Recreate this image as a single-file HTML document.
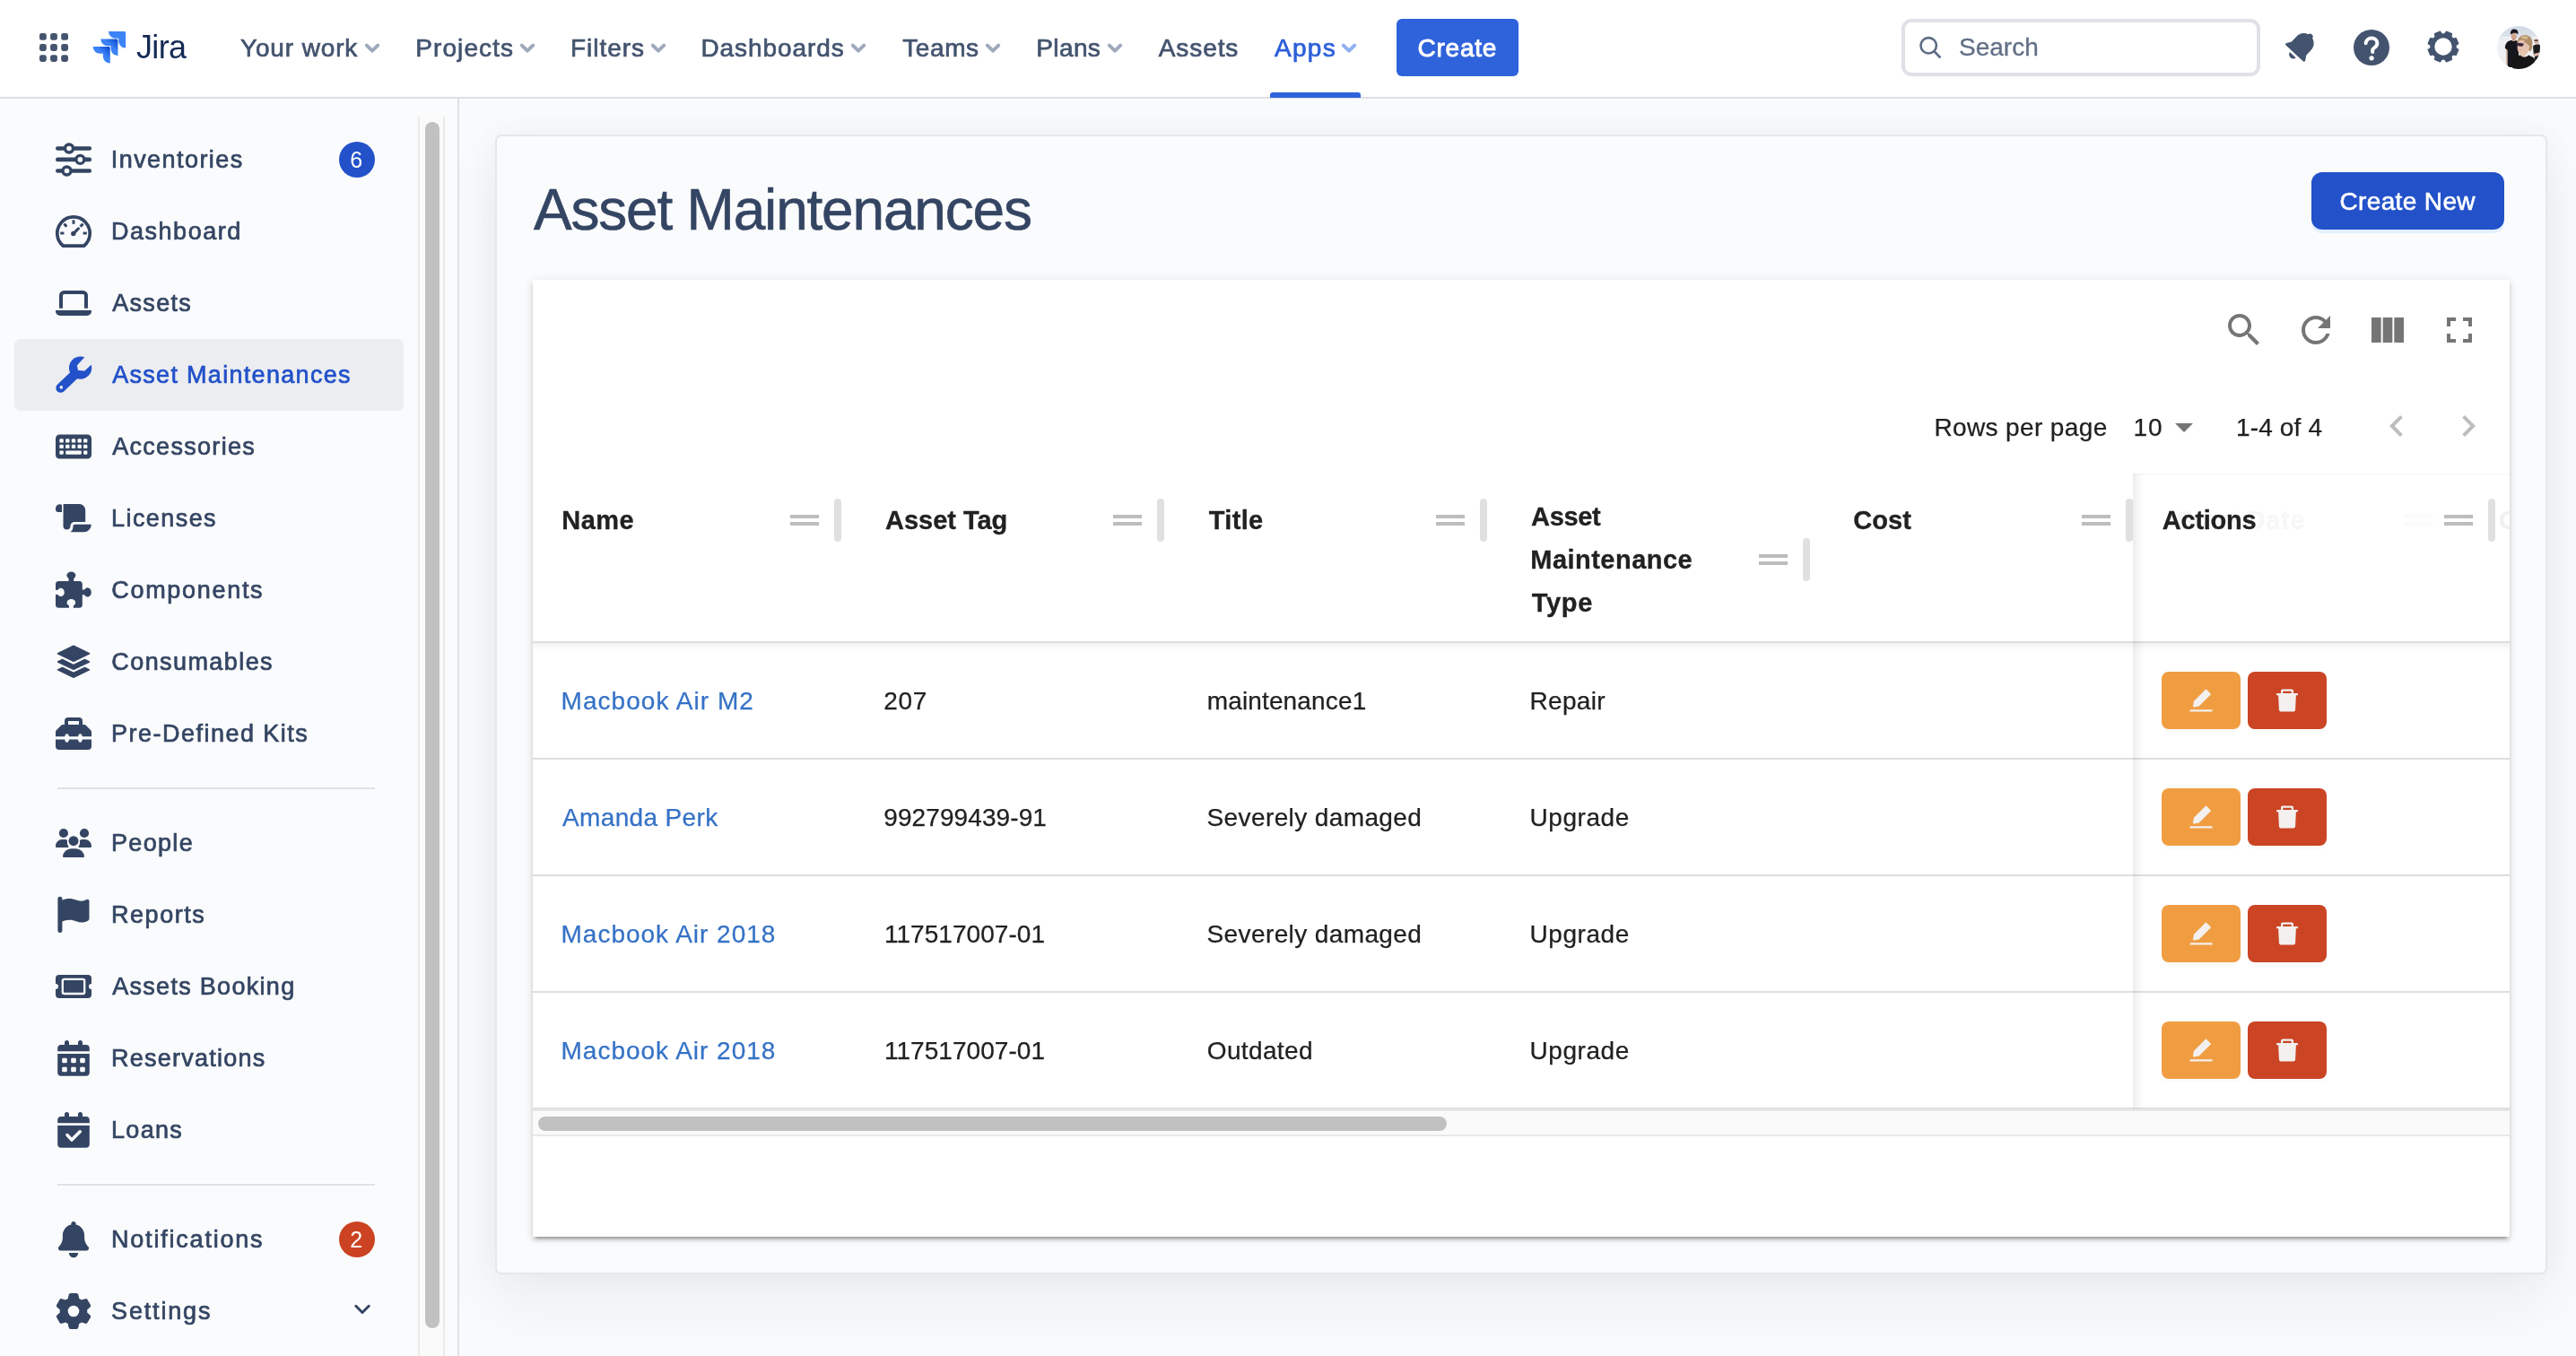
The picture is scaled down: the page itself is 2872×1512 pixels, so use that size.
<!DOCTYPE html>
<html lang="en"><head><meta charset="utf-8"><title>Asset Maintenances - Jira</title>
<style>
html,body{margin:0;padding:0;}
body{width:2872px;height:1512px;overflow:hidden;position:relative;background:#fff;font-family:'Liberation Sans',sans-serif;}
.t{position:absolute;white-space:nowrap;}
#root{position:absolute;left:0;top:0;width:2872px;height:1512px;will-change:transform;}
.a{position:absolute;}
svg{position:absolute;overflow:visible;}
#nav{position:absolute;left:0;top:0;width:2872px;height:108px;background:#fff;border-bottom:2px solid #dddfe5;}
#side{position:absolute;left:0;top:110px;width:510px;height:1402px;background:#fafbfc;border-right:2px solid #dfe1e6;}
#main{position:absolute;left:512px;top:110px;width:2360px;height:1402px;background:#f9fafb;overflow:hidden;}
#card{position:absolute;left:40px;top:40px;width:2284px;height:1267px;background:#fafbfc;border:2px solid #e5e7ec;border-radius:7px;box-shadow:0 30px 70px rgba(9,30,66,0.06), 0 0 36px rgba(9,30,66,0.035);}
#paper{position:absolute;left:594px;top:312px;width:2204px;height:1067px;background:#fff;box-shadow:0 6px 2px -4px rgba(0,0,0,0.2),0 4px 4px 0 rgba(0,0,0,0.14),0 2px 10px 0 rgba(0,0,0,0.12);overflow:hidden;}

</style></head>
<body>
<div id="root">
<div id="nav"></div>
<svg width="2872" height="110" style="left:0;top:0" viewBox="0 0 2872 110"><rect x="44.0" y="37.0" width="7.8" height="7.8" rx="2.4" fill="#44546f"/><rect x="44.0" y="49.1" width="7.8" height="7.8" rx="2.4" fill="#44546f"/><rect x="44.0" y="61.2" width="7.8" height="7.8" rx="2.4" fill="#44546f"/><rect x="56.1" y="37.0" width="7.8" height="7.8" rx="2.4" fill="#44546f"/><rect x="56.1" y="49.1" width="7.8" height="7.8" rx="2.4" fill="#44546f"/><rect x="56.1" y="61.2" width="7.8" height="7.8" rx="2.4" fill="#44546f"/><rect x="68.2" y="37.0" width="7.8" height="7.8" rx="2.4" fill="#44546f"/><rect x="68.2" y="49.1" width="7.8" height="7.8" rx="2.4" fill="#44546f"/><rect x="68.2" y="61.2" width="7.8" height="7.8" rx="2.4" fill="#44546f"/><defs><linearGradient id="jg1" x1="98%" y1="0%" x2="58%" y2="41%"><stop offset="18%" stop-color="#0f4fd0"/><stop offset="100%" stop-color="#3b83f7"/></linearGradient></defs><g transform="translate(103.7,29) scale(1.522,1.487)"><path d="M22.94 4H11.41c0 2.87 2.33 5.2 5.2 5.2h2.13v2.05c0 2.87 2.33 5.2 5.2 5.2V5c0-.55-.45-1-1-1z" fill="#3b83f7"/><path d="M17.23 9.74H5.71c0 2.87 2.33 5.2 5.2 5.2h2.12V17c0 2.87 2.33 5.2 5.2 5.2V10.74c0-.55-.44-1-1-1z" fill="url(#jg1)"/><path d="M11.53 15.48H0c0 2.87 2.33 5.2 5.2 5.2h2.13v2.06c0 2.87 2.33 5.2 5.2 5.2V16.48c0-.55-.45-1-1-1z" fill="url(#jg1)"/></g></svg>
<span class="t " style="left:151.96px;top:34.73px;font-size:36px;line-height:36px;color:#142a55;letter-spacing:-0.626px;">Jira</span>
<span class="t " style="left:267.96px;top:39.80px;font-size:28px;line-height:28px;color:#44546f;letter-spacing:0.868px;-webkit-text-stroke:0.7px #44546f;">Your work</span>
<svg width="20" height="14" style="left:405.0px;top:47.3px" viewBox="0 0 20 14"><path d="M3.8 3.6 L10 9.6 L16.2 3.6" fill="none" stroke="#9fa9bb" stroke-width="4" stroke-linecap="round" stroke-linejoin="round"/></svg>
<span class="t " style="left:463.25px;top:39.80px;font-size:28px;line-height:28px;color:#44546f;letter-spacing:1.094px;-webkit-text-stroke:0.7px #44546f;">Projects</span>
<svg width="20" height="14" style="left:578.0px;top:47.3px" viewBox="0 0 20 14"><path d="M3.8 3.6 L10 9.6 L16.2 3.6" fill="none" stroke="#9fa9bb" stroke-width="4" stroke-linecap="round" stroke-linejoin="round"/></svg>
<span class="t " style="left:636.05px;top:39.80px;font-size:28px;line-height:28px;color:#44546f;letter-spacing:0.944px;-webkit-text-stroke:0.7px #44546f;">Filters</span>
<svg width="20" height="14" style="left:723.8px;top:47.3px" viewBox="0 0 20 14"><path d="M3.8 3.6 L10 9.6 L16.2 3.6" fill="none" stroke="#9fa9bb" stroke-width="4" stroke-linecap="round" stroke-linejoin="round"/></svg>
<span class="t " style="left:781.45px;top:39.80px;font-size:28px;line-height:28px;color:#44546f;letter-spacing:0.921px;-webkit-text-stroke:0.7px #44546f;">Dashboards</span>
<svg width="20" height="14" style="left:946.7px;top:47.3px" viewBox="0 0 20 14"><path d="M3.8 3.6 L10 9.6 L16.2 3.6" fill="none" stroke="#9fa9bb" stroke-width="4" stroke-linecap="round" stroke-linejoin="round"/></svg>
<span class="t " style="left:1006.27px;top:39.80px;font-size:28px;line-height:28px;color:#44546f;letter-spacing:0.573px;-webkit-text-stroke:0.7px #44546f;">Teams</span>
<svg width="20" height="14" style="left:1096.8px;top:47.3px" viewBox="0 0 20 14"><path d="M3.8 3.6 L10 9.6 L16.2 3.6" fill="none" stroke="#9fa9bb" stroke-width="4" stroke-linecap="round" stroke-linejoin="round"/></svg>
<span class="t " style="left:1155.15px;top:39.80px;font-size:28px;line-height:28px;color:#44546f;letter-spacing:0.422px;-webkit-text-stroke:0.7px #44546f;">Plans</span>
<svg width="20" height="14" style="left:1232.8px;top:47.3px" viewBox="0 0 20 14"><path d="M3.8 3.6 L10 9.6 L16.2 3.6" fill="none" stroke="#9fa9bb" stroke-width="4" stroke-linecap="round" stroke-linejoin="round"/></svg>
<span class="t " style="left:1291.69px;top:39.80px;font-size:28px;line-height:28px;color:#44546f;letter-spacing:0.931px;-webkit-text-stroke:0.7px #44546f;">Assets</span>
<span class="t " style="left:1420.99px;top:39.80px;font-size:28px;line-height:28px;color:#2d60d8;letter-spacing:1.311px;-webkit-text-stroke:0.7px #2d60d8;">Apps</span>
<svg width="20" height="14" style="left:1494.3px;top:47.3px" viewBox="0 0 20 14"><path d="M3.8 3.6 L10 9.6 L16.2 3.6" fill="none" stroke="#8fb0f3" stroke-width="4" stroke-linecap="round" stroke-linejoin="round"/></svg>
<div class="a" style="left:1416px;top:103px;width:101px;height:6px;background:#2f63dc;border-radius:3px 3px 0 0"></div>
<div class="a" style="left:1557px;top:21px;width:136px;height:64px;background:#2f63dc;border-radius:6px"></div>
<span class="t " style="left:1580.42px;top:39.80px;font-size:28px;line-height:28px;color:#fff;letter-spacing:0.787px;-webkit-text-stroke:0.9px #fff;">Create</span>
<div class="a" style="left:2120px;top:21px;width:392px;height:56px;border:4px solid #dfe1e7;border-radius:11px;background:#fff"></div>
<svg width="30" height="30" style="left:2138px;top:38px" viewBox="0 0 30 30"><circle cx="12.2" cy="12.8" r="8.7" fill="none" stroke="#5d6b84" stroke-width="2.6"/><path d="M18.6 19.4 L24.6 25.6" stroke="#5d6b84" stroke-width="2.8" stroke-linecap="round"/></svg>
<span class="t " style="left:2184.10px;top:38.90px;font-size:28px;line-height:28px;color:#626f86;letter-spacing:-0.021px;-webkit-text-stroke:0.3px #626f86;">Search</span>
<svg width="48" height="48" style="left:2541px;top:28.2px" viewBox="0 0 48 48"><g transform="rotate(43 24 24) translate(24 24) scale(1.06) translate(-24 -24)" fill="#44546f"><path d="M24 6.5c1.6 0 2.9 1.1 3.1 2.6 4.6 1.4 7.4 5.4 7.4 10.4v7.2l3 4.6c.6 1-.1 2.2-1.2 2.2H11.700c-1.1 0-1.800-1.200-1.200-2.200l3-4.600v-7.200c0-5 2.800-9 7.400-10.400.200-1.500 1.500-2.600 3.100-2.600z"/><path d="M19.6 36h8.800c-.4 2.200-2.200 3.700-4.400 3.700s-4-1.500-4.400-3.700z"/></g></svg>
<svg width="44" height="44" style="left:2622px;top:31px" viewBox="0 0 44 44"><circle cx="22" cy="22" r="20" fill="#44546f"/><path d="M15.6 17.2c.3-3.300 2.900-5.600 6.500-5.600 3.700 0 6.300 2.300 6.300 5.500 0 2.300-1.100 3.800-3.100 5-1.500.9-2.100 1.700-2.100 3.100v1.9" fill="none" stroke="#fff" stroke-width="4" stroke-linecap="round"/><circle cx="22.1" cy="33.8" r="2.6" fill="#fff"/></svg>
<svg width="44" height="44" style="left:2702px;top:30.2px" viewBox="0 0 44 44"><path d="M35.90 23.65 L38.64 25.47 L36.22 31.31 L32.99 30.67 L30.67 32.99 L31.31 36.22 L25.47 38.64 L23.65 35.90 L20.35 35.90 L18.53 38.64 L12.69 36.22 L13.33 32.99 L11.01 30.67 L7.78 31.31 L5.36 25.47 L8.10 23.65 L8.10 20.35 L5.36 18.53 L7.78 12.69 L11.01 13.33 L13.33 11.01 L12.69 7.78 L18.53 5.36 L20.35 8.10 L23.65 8.10 L25.47 5.36 L31.31 7.78 L30.67 11.01 L32.99 13.33 L36.22 12.69 L38.64 18.53 L35.90 20.35Z M11.50 22.00 a10.5 10.5 0 1 0 21.0 0 a10.5 10.5 0 1 0 -21.0 0Z" fill="#44546f" fill-rule="evenodd" stroke="#44546f" stroke-width="1.6" stroke-linejoin="round"/></svg>
<svg width="48" height="48" style="left:2784.2px;top:29px" viewBox="0 0 48 48"><defs><clipPath id="avc"><circle cx="24" cy="24" r="24"/></clipPath><filter id="avb" x="-10%" y="-10%" width="120%" height="120%"><feGaussianBlur stdDeviation="0.55"/></filter><linearGradient id="avsky" x1="0" y1="0" x2="0" y2="1"><stop offset="0" stop-color="#cfd9e4"/><stop offset="0.27" stop-color="#dbe2ea"/><stop offset="0.34" stop-color="#eef0f3"/><stop offset="1" stop-color="#f1f1f2"/></linearGradient></defs><g clip-path="url(#avc)"><rect x="-2" y="-2" width="52" height="52" fill="url(#avsky)"/><g filter="url(#avb)"><rect x="4" y="12" width="14" height="1.6" fill="#f4f6f8"/><path d="M9.700 26 L11.600 26 L12.200 43 L10 44 Z" fill="#dcc0b0"/><path d="M8.800 24.500 C9 19 12 16.300 16 16 L21 16 C23.500 16.500 24.500 19 24.200 22 L24 46 L11.800 46 L11.600 27 Z" fill="#17161a"/><ellipse cx="18.700" cy="11.400" rx="3.100" ry="4" fill="#cfa78f"/><path d="M15 9.500 C14.600 5 17 3.500 19.500 3.600 C22.500 3.700 24 6 23.300 9.600 C22 7.500 18 7 15 9.500 Z" fill="#19171a"/><rect x="17" y="14.500" width="3.400" height="2.500" fill="#c59c86"/><ellipse cx="43.200" cy="13.300" rx="2.900" ry="2.300" fill="#f1ebea"/><ellipse cx="44" cy="17.300" rx="2.600" ry="3" fill="#dcb8a6"/><rect x="41.500" y="15.500" width="4" height="1.300" fill="#2a2428"/><path d="M40 23 C41 20.500 45 20 48 21 L48 34 L41 33 Z" fill="#1b1a1e"/><path d="M40.500 31 L47 29.500 L47 33 L42 35 Z" fill="#d9b5a6"/><path d="M41.500 34.500 L47 32.500 L46 40 L42.500 38 Z" fill="#1a191c"/><path d="M22.500 22 C21.500 13 27 9.300 32 10 C37.500 10.800 40 15 39.300 21 C39 25 38.500 27.500 36.500 28.500 L33 24 L24 17.500 Z" fill="#b08f6b"/><path d="M27 11.500 C30 10.500 33 11 35 12.500 L33 15 L27.500 14 Z" fill="#d2b68f"/><path d="M22.600 19.500 C23 16.500 25 15.500 28 15.800 C31 16 33.500 18 34.600 21 C36 21 36.600 23 35.500 25.500 C35 29 33.500 31.500 31 33 L31.500 36 L25 36 L25.500 30.500 C23.500 29.500 22.500 27 22.700 24 Z" fill="#e6c3ae"/><path d="M30.500 15.500 C33 16 35 18 35.300 21.500 C34 20.500 32.500 19 30.500 18.500 Z" fill="#b3916d"/><path d="M21.800 19.300 C23.500 18.500 26 18.700 27.600 19.300 L29.800 19.500 L29.600 20.400 C29.400 22 28 23 26 22.800 C24.500 22.700 23 22.300 22 21.600 Z" fill="#3d2b41"/><path d="M23.500 26.300 C24.800 26.800 26 26.800 27 26.300" stroke="#c98f86" stroke-width="0.7" fill="none"/><path d="M17.500 41 C18 36.500 21 34 26 32.600 C28 35.500 32 35.500 35 32.500 C39.500 33.500 43 36.500 43.500 41 L42 50 L17 50 Z" fill="#151418"/><path d="M36 32 C38 31.500 39.500 33 39.500 34.500 L37 33.500 Z" fill="#e9e6e6"/></g></g></svg>
<div id="side"></div>
<div class="a" style="left:466px;top:130px;width:26px;height:1382px;background:#fafafa;border-left:2px solid #ebebeb;border-right:2px solid #ebebeb"></div>
<div class="a" style="left:474px;top:136px;width:16px;height:1345px;background:#c1c1c1;border-radius:8px"></div>
<div class="a" style="left:16px;top:378px;width:434px;height:80px;background:#ecedf1;border-radius:7px"></div>
<span class="t " style="left:123.75px;top:165.04px;font-size:27px;line-height:27px;color:#344563;letter-spacing:1.439px;-webkit-text-stroke:0.7px #344563;">Inventories</span>
<span class="t " style="left:124.03px;top:245.04px;font-size:27px;line-height:27px;color:#344563;letter-spacing:1.517px;-webkit-text-stroke:0.7px #344563;">Dashboard</span>
<span class="t " style="left:125.20px;top:325.04px;font-size:27px;line-height:27px;color:#344563;letter-spacing:1.327px;-webkit-text-stroke:0.7px #344563;">Assets</span>
<span class="t " style="left:125.20px;top:405.04px;font-size:27px;line-height:27px;color:#2251c9;letter-spacing:1.306px;-webkit-text-stroke:0.7px #2251c9;">Asset Maintenances</span>
<span class="t " style="left:125.20px;top:485.04px;font-size:27px;line-height:27px;color:#344563;letter-spacing:1.305px;-webkit-text-stroke:0.7px #344563;">Accessories</span>
<span class="t " style="left:124.03px;top:565.04px;font-size:27px;line-height:27px;color:#344563;letter-spacing:1.431px;-webkit-text-stroke:0.7px #344563;">Licenses</span>
<span class="t " style="left:124.29px;top:645.04px;font-size:27px;line-height:27px;color:#344563;letter-spacing:1.693px;-webkit-text-stroke:0.7px #344563;">Components</span>
<span class="t " style="left:124.29px;top:725.04px;font-size:27px;line-height:27px;color:#344563;letter-spacing:1.424px;-webkit-text-stroke:0.7px #344563;">Consumables</span>
<span class="t " style="left:124.03px;top:805.04px;font-size:27px;line-height:27px;color:#344563;letter-spacing:1.481px;-webkit-text-stroke:0.7px #344563;">Pre-Defined Kits</span>
<div class="a" style="left:64px;top:878px;width:354px;height:2px;background:#dfe1e6"></div>
<span class="t " style="left:124.03px;top:927.04px;font-size:27px;line-height:27px;color:#344563;letter-spacing:1.315px;-webkit-text-stroke:0.7px #344563;">People</span>
<span class="t " style="left:124.03px;top:1007.04px;font-size:27px;line-height:27px;color:#344563;letter-spacing:1.537px;-webkit-text-stroke:0.7px #344563;">Reports</span>
<span class="t " style="left:125.20px;top:1087.04px;font-size:27px;line-height:27px;color:#344563;letter-spacing:1.299px;-webkit-text-stroke:0.7px #344563;">Assets Booking</span>
<span class="t " style="left:124.03px;top:1167.04px;font-size:27px;line-height:27px;color:#344563;letter-spacing:1.238px;-webkit-text-stroke:0.7px #344563;">Reservations</span>
<span class="t " style="left:124.03px;top:1247.04px;font-size:27px;line-height:27px;color:#344563;letter-spacing:1.304px;-webkit-text-stroke:0.7px #344563;">Loans</span>
<div class="a" style="left:64px;top:1320px;width:354px;height:2px;background:#dfe1e6"></div>
<span class="t " style="left:124.03px;top:1369.04px;font-size:27px;line-height:27px;color:#344563;letter-spacing:1.792px;-webkit-text-stroke:0.7px #344563;">Notifications</span>
<span class="t " style="left:124.09px;top:1449.04px;font-size:27px;line-height:27px;color:#344563;letter-spacing:1.824px;-webkit-text-stroke:0.7px #344563;">Settings</span>
<svg width="510" height="1512" style="left:0;top:0" viewBox="0 0 510 1512"><path d="M64.3 165.5 H99.8" stroke="#344563" stroke-width="4.6" stroke-linecap="round"/><circle cx="77" cy="165.5" r="4.5" fill="#fafbfc" stroke="#344563" stroke-width="3.4"/><path d="M64.3 177.9 H99.8" stroke="#344563" stroke-width="4.6" stroke-linecap="round"/><circle cx="89.4" cy="177.9" r="4.5" fill="#fafbfc" stroke="#344563" stroke-width="3.4"/><path d="M64.3 190.5 H99.8" stroke="#344563" stroke-width="4.6" stroke-linecap="round"/><circle cx="74.5" cy="190.5" r="4.5" fill="#fafbfc" stroke="#344563" stroke-width="3.4"/><path d="M70.5 274.2 H93.5 A18.2 18.2 0 1 0 70.5 274.2 Z" fill="none" stroke="#344563" stroke-width="3.7" stroke-linejoin="round"/><g stroke="#344563" stroke-width="2.9" stroke-linecap="butt"><path d="M82 245.3 V249.8"/><path d="M67.2 260 H71.4"/><path d="M92.6 260 H96.8"/><path d="M71.4 249.6 L74.400 252.6"/><path d="M92.6 249.6 L89.6 252.6"/></g><path d="M82 260.4 L87.3 255" stroke="#344563" stroke-width="3.2" stroke-linecap="round"/><circle cx="81.8" cy="260.5" r="2.7" fill="#344563"/><path d="M68 343.8 V329.5 a3.5 3.5 0 0 1 3.5 -3.5 H92.5 a3.5 3.5 0 0 1 3.5 3.5 V343.8" fill="none" stroke="#344563" stroke-width="4"/><path d="M62 346 H102 V347 a5 5 0 0 1 -5 5 H67 a5 5 0 0 1 -5 -5 Z" fill="#344563"/><path d="M67.6 432.6 L85 416" stroke="#2251c9" stroke-width="10.5" stroke-linecap="round"/><circle cx="89.6" cy="410.2" r="12.6" fill="#2251c9"/><path d="M87 407.6 L98.500 395.2 L108 399.5 L94 412.6 L87.800 412 Z" fill="#ecedf1" stroke="#ecedf1" stroke-width="2" stroke-linejoin="round"/><circle cx="68.3" cy="431.9" r="1.8" fill="#ecedf1"/><rect x="62" y="484.5" width="40" height="27" rx="4.5" fill="#344563"/><rect x="66.39999999999999" y="489.2" width="4.4" height="4.4" rx="1.2" fill="#fafbfc"/><rect x="73.1" y="489.2" width="4.4" height="4.4" rx="1.2" fill="#fafbfc"/><rect x="79.8" y="489.2" width="4.4" height="4.4" rx="1.2" fill="#fafbfc"/><rect x="86.5" y="489.2" width="4.4" height="4.4" rx="1.2" fill="#fafbfc"/><rect x="93.0" y="489.2" width="4.4" height="4.4" rx="1.2" fill="#fafbfc"/><rect x="66.39999999999999" y="495.7" width="4.4" height="4.4" rx="1.2" fill="#fafbfc"/><rect x="73.1" y="495.7" width="4.4" height="4.4" rx="1.2" fill="#fafbfc"/><rect x="79.8" y="495.7" width="4.4" height="4.4" rx="1.2" fill="#fafbfc"/><rect x="86.5" y="495.7" width="4.4" height="4.4" rx="1.2" fill="#fafbfc"/><rect x="93.0" y="495.7" width="4.4" height="4.4" rx="1.2" fill="#fafbfc"/><rect x="66.39999999999999" y="502.40000000000003" width="4.4" height="4.4" rx="1.2" fill="#fafbfc"/><rect x="93.0" y="502.40000000000003" width="4.4" height="4.4" rx="1.2" fill="#fafbfc"/><rect x="73.2" y="502.40000000000003" width="17.6" height="4.4" rx="1.2" fill="#fafbfc"/><path d="M62 566.5 a4.500 4.500 0 0 1 7 -3.5 V571 H65 a3 3 0 0 1 -3 -3 Z" fill="#344563"/><path d="M70.6 562 H88.500 a6.700 6.700 0 0 1 6.700 6.700 V582 H83 a4.5 4.5 0 0 0 -4.500 4.500 a4 4 0 0 1 -8 0 Z" fill="#344563"/><path d="M83.500 584.8 H101.8 a8.300 8.300 0 0 1 -8.300 8.500 H78.5 a7 7 0 0 0 3 -5.5 a2.5 2.5 0 0 1 2 -3 Z" fill="#344563"/><rect x="62" y="648" width="29.8" height="29.700" rx="3.5" fill="#344563"/><ellipse cx="79.4" cy="641.6" rx="5" ry="4.1" fill="#344563"/><rect x="76.6" y="643" width="5.6" height="7" fill="#344563"/><ellipse cx="97.6" cy="660.4" rx="4.2" ry="5.2" fill="#344563"/><rect x="90" y="657.6" width="6" height="5.6" fill="#344563"/><ellipse cx="67.8" cy="660.4" rx="4" ry="4.600" fill="#fafbfc"/><rect x="61" y="657.9" width="5" height="5" fill="#fafbfc"/><ellipse cx="79.4" cy="672" rx="4.8" ry="4" fill="#fafbfc"/><rect x="77" y="673" width="4.800" height="6" fill="#fafbfc"/><path d="M82 720.3 L99.500 728.8 L82 737.3 L64.5 728.8 Z" fill="#344563" stroke="#344563" stroke-width="1.6" stroke-linejoin="round"/><path d="M69.5 735.5 L82 741.6 L94.5 735.5 L99.500 738 L82 746.4 L64.5 738 Z" fill="#344563" stroke="#344563" stroke-width="1.4" stroke-linejoin="round"/><path d="M69.5 744.4 L82 750.5 L94.5 744.4 L99.500 746.9 L82 755.3 L64.5 746.9 Z" fill="#344563" stroke="#344563" stroke-width="1.4" stroke-linejoin="round"/><path d="M74 808 V804 a2 2 0 0 1 2 -2 H88 a2 2 0 0 1 2 2 V808" fill="none" stroke="#344563" stroke-width="4"/><path d="M70 808 H94 a3 3 0 0 1 2 1 L101 814 a3 3 0 0 1 1 2 V821.3 H62 V816 a3 3 0 0 1 1 -2 L68 809 a3 3 0 0 1 2 -1 Z" fill="#344563"/><path d="M62 824.5 H102 V832 a4 4 0 0 1 -4 4 H66 a4 4 0 0 1 -4 -4 Z" fill="#344563"/><ellipse cx="74.6" cy="823" rx="2.5" ry="4.800" fill="#fafbfc"/><ellipse cx="89.4" cy="823" rx="2.5" ry="4.800" fill="#fafbfc"/><circle cx="70.9" cy="929" r="5.1" fill="#344563"/><circle cx="94" cy="929" r="5.1" fill="#344563"/><path d="M62 944 a7.500 7.500 0 0 1 7.500 -8 H72.5 a5 5 0 0 1 2.500 1 a9 9 0 0 0 1.500 7 a1 1 0 0 1 -1 1 H63 a1 1 0 0 1 -1 -1 Z" fill="#344563"/><path d="M102 944 a7.500 7.500 0 0 0 -7.500 -8 H91.5 a5 5 0 0 0 -2.500 1 a9 9 0 0 1 -1.500 7 a1 1 0 0 0 1 1 H101 a1 1 0 0 0 1 -1 Z" fill="#344563"/><circle cx="82" cy="937.7" r="6.1" fill="#344563" stroke="#fafbfc" stroke-width="1.2"/><path d="M70 955 a9.500 9.500 0 0 1 9.500 -8.800 H84.5 a9.500 9.500 0 0 1 9.500 8.800 a1.100 1.100 0 0 1 -1.100 1.100 H71.100 a1.100 1.100 0 0 1 -1.100 -1.100 Z" fill="#344563"/><path d="M66.9 1002.3 V1037.5" stroke="#344563" stroke-width="5" stroke-linecap="round"/><path d="M68 1004 C75 1001 80 1001.5 85 1003.5 C89 1005.2 93 1005 96.500 1003 C98 1002.2 99.5 1003 99.5 1005 V1024 C99.5 1025.5 98.8 1026.3 97.5 1027 C93 1029 89 1029 85 1027.3 C80 1025.2 75 1025 68 1028 Z" fill="#344563"/><path d="M66 1087 H98 a4 4 0 0 1 4 4 V1097 a3 3 0 0 0 0 6 V1109 a4 4 0 0 1 -4 4 H66 a4 4 0 0 1 -4 -4 V1103 a3 3 0 0 0 0 -6 V1091 a4 4 0 0 1 4 -4 Z" fill="#344563"/><rect x="69.8" y="1091.8" width="24.4" height="16.2" rx="1.800" fill="none" stroke="#fafbfc" stroke-width="2.3"/><path d="M68.2 1165 H95.8 a4 4 0 0 1 4 4 V1172.2 H64.2 V1169 a4 4 0 0 1 4 -4 Z" fill="#344563"/><path d="M74.5 1162.5 V1168 M89.5 1162.5 V1168" stroke="#344563" stroke-width="5" stroke-linecap="round"/><path d="M64.2 1175 H99.8 V1195.7 a4 4 0 0 1 -4 4 H68.2 a4 4 0 0 1 -4 -4 Z" fill="#344563"/><rect x="69.2" y="1179.8" width="5.6" height="5.4" rx="1.3" fill="#fafbfc"/><rect x="79.2" y="1179.8" width="5.6" height="5.4" rx="1.3" fill="#fafbfc"/><rect x="89.2" y="1179.8" width="5.6" height="5.4" rx="1.3" fill="#fafbfc"/><rect x="69.2" y="1189.8" width="5.6" height="5.4" rx="1.3" fill="#fafbfc"/><rect x="79.2" y="1189.8" width="5.6" height="5.4" rx="1.3" fill="#fafbfc"/><rect x="89.2" y="1189.8" width="5.6" height="5.4" rx="1.3" fill="#fafbfc"/><path d="M68.2 1245 H95.8 a4 4 0 0 1 4 4 V1252.2 H64.2 V1249 a4 4 0 0 1 4 -4 Z" fill="#344563"/><path d="M74.5 1242.5 V1248 M89.5 1242.5 V1248" stroke="#344563" stroke-width="5" stroke-linecap="round"/><path d="M64.2 1255 H99.8 V1275.7 a4 4 0 0 1 -4 4 H68.2 a4 4 0 0 1 -4 -4 Z" fill="#344563"/><path d="M75 1265.6 L80 1271 L89.2 1261.8" fill="none" stroke="#fafbfc" stroke-width="3.6" stroke-linecap="round" stroke-linejoin="round"/><path d="M82 1362 a2.600 2.600 0 0 1 2.600 2.600 v.9 c5.600 1.200 9.500 6 9.500 12 v2.500 c0 3.500 1.300 6.800 3.600 9.400 l.8.900 c1.200 1.400.3 3.900-1.700 4.300 H67.2 c-2-.400-2.900-2.900-1.700-4.300 l.8-.900 c2.300-2.600 3.600-5.900 3.600-9.400 v-2.500 c0-6 3.900-10.800 9.500-12 v-.9 a2.600 2.600 0 0 1 2.600 -2.600 Z" fill="#344563"/><path d="M76.8 1397 H87.2 a5.200 5.200 0 0 1 -10.400 0 Z" fill="#344563"/><path d="M77.53 1449.37 L78.70 1444.20 L85.30 1444.20 L86.47 1449.37 L90.70 1451.81 L95.76 1450.24 L99.06 1455.96 L95.18 1459.56 L95.18 1464.44 L99.06 1468.04 L95.76 1473.76 L90.70 1472.19 L86.47 1474.63 L85.30 1479.80 L78.70 1479.80 L77.53 1474.63 L73.30 1472.19 L68.24 1473.76 L64.94 1468.04 L68.82 1464.44 L68.82 1459.56 L64.94 1455.96 L68.24 1450.24 L73.30 1451.81Z" fill="#344563" stroke="#344563" stroke-width="4.2" stroke-linejoin="round"/><circle cx="82" cy="1462" r="6.3" fill="#fafbfc"/><path d="M396.8 1456.3 L404 1463.500 L411.200 1456.3" fill="none" stroke="#344563" stroke-width="3" stroke-linecap="round" stroke-linejoin="round"/></svg>
<div class="a" style="left:378px;top:158px;width:40px;height:40px;border-radius:20px;background:#2251c9"></div>
<span class="t " style="left:390.33px;top:165.64px;font-size:25px;line-height:25px;color:#fff;">6</span>
<div class="a" style="left:378px;top:1362px;width:40px;height:40px;border-radius:20px;background:#cb4322"></div>
<span class="t " style="left:390.28px;top:1369.64px;font-size:25px;line-height:25px;color:#fff;">2</span>
<div id="main"><div id="card"></div></div>
<span class="t " style="left:594.92px;top:201.57px;font-size:64px;line-height:64px;color:#344563;letter-spacing:-1.194px;-webkit-text-stroke:0.6px #344563;">Asset Maintenances</span>
<div class="a" style="left:2577px;top:192px;width:215px;height:64px;background:#2251c9;border-radius:12px;box-shadow:0 4px 0 rgba(5,145,255,0.1)"></div>
<span class="t " style="left:2608.44px;top:211.10px;font-size:28px;line-height:28px;color:#fff;letter-spacing:0.369px;-webkit-text-stroke:0.6px #fff;">Create New</span>
<div id="paper"><div class="a" style="left:-594px;top:-312px;width:2872px;height:1512px"><svg width="48" height="48" style="left:2478px;top:344px" viewBox="0 0 24 24"><path d="M15.5 14h-.79l-.28-.27C15.41 12.59 16 11.11 16 9.5 16 5.91 13.09 3 9.5 3S3 5.91 3 9.5 5.91 16 9.5 16c1.610 0 3.090-.59 4.230-1.570l.27.28v.79l5 4.990L20.490 19l-4.990-5zm-6 0C7.010 14 5 11.990 5 9.500S7.010 5 9.500 5 14 7.010 14 9.500 11.990 14 9.500 14z" fill="#757575"/></svg><svg width="48" height="48" style="left:2558px;top:344px" viewBox="0 0 24 24"><path d="M17.65 6.35C16.2 4.9 14.21 4 12 4c-4.420 0-7.990 3.580-7.990 8s3.570 8 7.990 8c3.730 0 6.840-2.550 7.730-6h-2.080c-.82 2.330-3.040 4-5.650 4-3.310 0-6-2.690-6-6s2.690-6 6-6c1.660 0 3.140.69 4.220 1.780L13 11h7V4l-2.350 2.350z" fill="#757575"/></svg><svg width="48" height="48" style="left:2638px;top:344px" viewBox="0 0 24 24"><path d="M14.67 5v14H9.33V5h5.340zm1 14H21V5h-5.330v14zm-7.340 0V5H3v14h5.330z" fill="#757575"/></svg><svg width="48" height="48" style="left:2718px;top:344px" viewBox="0 0 24 24"><path d="M7 14H5v5h5v-2H7v-3zm-2-4h2V7h3V5H5v5zm12 7h-3v2h5v-5h-2v3zM14 5v2h3v3h2V5h-5z" fill="#757575"/></svg><span class="t " style="left:2156.47px;top:462.80px;font-size:28px;line-height:28px;color:#212121;letter-spacing:0.370px;-webkit-text-stroke:0.25px #212121;">Rows per page</span><span class="t " style="left:2378.40px;top:462.80px;font-size:28px;line-height:28px;color:#212121;letter-spacing:0.932px;-webkit-text-stroke:0.25px #212121;">10</span><svg width="48" height="48" style="left:2410.75px;top:451.75px" viewBox="0 0 24 24"><path d="M7 10l5 5 5-5z" fill="#757575"/></svg><span class="t " style="left:2492.90px;top:462.80px;font-size:28px;line-height:28px;color:#212121;letter-spacing:0.169px;-webkit-text-stroke:0.25px #212121;">1-4 of 4</span><svg width="48" height="48" style="left:2648.25px;top:451.25px" viewBox="0 0 24 24"><path d="M15.41 7.41L14 6l-6 6 6 6 1.410-1.410L10.830 12z" fill="#bdbdbd"/></svg><svg width="48" height="48" style="left:2728.3px;top:451.25px" viewBox="0 0 24 24"><path d="M10 6L8.590 7.410 13.170 12l-4.580 4.590L10 18l6-6z" fill="#bdbdbd"/></svg><span class="t " style="left:626.26px;top:566.20px;font-size:29px;line-height:29px;color:#212121;letter-spacing:0.492px;font-weight:bold;-webkit-text-stroke:0.3px #212121;">Name</span><svg width="48" height="48" style="left:873px;top:556px" viewBox="0 0 24 24"><path d="M20 9H4v2h16V9zM4 15h16v-2H4v2z" fill="#bdbdbd"/></svg><div class="a" style="left:930px;top:555.8px;width:8px;height:48.4px;border-radius:4px;background:#e0e0e0"></div><span class="t " style="left:987.05px;top:566.20px;font-size:29px;line-height:29px;color:#212121;letter-spacing:-0.031px;font-weight:bold;-webkit-text-stroke:0.3px #212121;">Asset Tag</span><svg width="48" height="48" style="left:1233px;top:556px" viewBox="0 0 24 24"><path d="M20 9H4v2h16V9zM4 15h16v-2H4v2z" fill="#bdbdbd"/></svg><div class="a" style="left:1290px;top:555.8px;width:8px;height:48.4px;border-radius:4px;background:#e0e0e0"></div><span class="t " style="left:1347.79px;top:566.20px;font-size:29px;line-height:29px;color:#212121;letter-spacing:0.315px;font-weight:bold;-webkit-text-stroke:0.3px #212121;">Title</span><svg width="48" height="48" style="left:1593px;top:556px" viewBox="0 0 24 24"><path d="M20 9H4v2h16V9zM4 15h16v-2H4v2z" fill="#bdbdbd"/></svg><div class="a" style="left:1650px;top:555.8px;width:8px;height:48.4px;border-radius:4px;background:#e0e0e0"></div><span class="t " style="left:1707.05px;top:562.20px;font-size:29px;line-height:29px;color:#212121;letter-spacing:-0.327px;font-weight:bold;-webkit-text-stroke:0.3px #212121;">Asset</span><span class="t " style="left:1706.26px;top:610.20px;font-size:29px;line-height:29px;color:#212121;letter-spacing:0.477px;font-weight:bold;-webkit-text-stroke:0.3px #212121;">Maintenance</span><span class="t " style="left:1707.79px;top:658.20px;font-size:29px;line-height:29px;color:#212121;letter-spacing:0.647px;font-weight:bold;-webkit-text-stroke:0.3px #212121;">Type</span><svg width="48" height="48" style="left:1953px;top:600px" viewBox="0 0 24 24"><path d="M20 9H4v2h16V9zM4 15h16v-2H4v2z" fill="#bdbdbd"/></svg><div class="a" style="left:2010px;top:599.8px;width:8px;height:48.4px;border-radius:4px;background:#e0e0e0"></div><span class="t " style="left:2066.37px;top:566.20px;font-size:29px;line-height:29px;color:#212121;letter-spacing:0.015px;font-weight:bold;-webkit-text-stroke:0.3px #212121;">Cost</span><svg width="48" height="48" style="left:2313px;top:556px" viewBox="0 0 24 24"><path d="M20 9H4v2h16V9zM4 15h16v-2H4v2z" fill="#bdbdbd"/></svg><div class="a" style="left:2370px;top:555.8px;width:8px;height:48.4px;border-radius:4px;background:#e0e0e0"></div><span class="t " style="left:2426.22px;top:566.20px;font-size:29px;line-height:29px;color:#f7f7f7;letter-spacing:0.691px;font-weight:bold;-webkit-text-stroke:0.3px #f7f7f7;">Start Date</span><svg width="48" height="48" style="left:2673px;top:556px" viewBox="0 0 24 24"><path d="M20 9H4v2h16V9zM4 15h16v-2H4v2z" fill="#fbfbfb"/></svg><div class="a" style="left:2730px;top:555.8px;width:8px;height:48.4px;border-radius:4px;background:#ffffff"></div><span class="t " style="left:2785.79px;top:566.20px;font-size:29px;line-height:29px;color:#f0f0f0;font-weight:bold;">C</span><div class="a" style="left:594px;top:715px;width:2204px;height:2px;background:#dedede"></div><div class="a" style="left:594px;top:845px;width:2204px;height:2px;background:#dedede"></div><div class="a" style="left:594px;top:975px;width:2204px;height:2px;background:#dedede"></div><div class="a" style="left:594px;top:1105px;width:2204px;height:2px;background:#dedede"></div><div class="a" style="left:594px;top:1235px;width:2204px;height:2px;background:#dedede"></div><div class="a" style="left:594px;top:717px;width:2204px;height:12px;background:linear-gradient(rgba(0,0,0,0.05),rgba(0,0,0,0.015) 50%,rgba(0,0,0,0))"></div><div class="a" style="left:2378px;top:528px;width:14px;height:708px;background:linear-gradient(90deg,rgba(0,0,0,0.075),rgba(0,0,0,0.03) 40%,rgba(0,0,0,0))"></div><div class="a" style="left:2378px;top:528px;width:420px;height:2px;background:rgba(0,0,0,0.02)"></div><span class="t " style="left:2410.85px;top:566.20px;font-size:29px;line-height:29px;color:#212121;letter-spacing:-0.269px;font-weight:bold;-webkit-text-stroke:0.3px #212121;">Actions</span><svg width="48" height="48" style="left:2717.2px;top:556px" viewBox="0 0 24 24"><path d="M20 9H4v2h16V9zM4 15h16v-2H4v2z" fill="#bdbdbd"/></svg><div class="a" style="left:2774px;top:555.800px;width:8px;height:48.400px;border-radius:4px;background:#e0e0e0"></div><span class="t " style="left:625.57px;top:767.80px;font-size:28px;line-height:28px;color:#3572c6;letter-spacing:1.044px;-webkit-text-stroke:0.25px #3572c6;">Macbook Air M2</span><span class="t " style="left:985.23px;top:767.80px;font-size:28px;line-height:28px;color:#212121;letter-spacing:0.726px;-webkit-text-stroke:0.25px #212121;">207</span><span class="t " style="left:1345.70px;top:767.80px;font-size:28px;line-height:28px;color:#212121;letter-spacing:0.147px;-webkit-text-stroke:0.25px #212121;">maintenance1</span><span class="t " style="left:1705.47px;top:767.80px;font-size:28px;line-height:28px;color:#212121;letter-spacing:0.323px;-webkit-text-stroke:0.25px #212121;">Repair</span><div class="a" style="left:2410px;top:749px;width:88px;height:64px;border-radius:8px;background:#f09d42;box-shadow:0 4px 0 rgba(0,0,0,0.016)"></div><div class="a" style="left:2506px;top:749px;width:88px;height:64px;border-radius:8px;background:#cb4424;box-shadow:0 4px 0 rgba(0,0,0,0.016)"></div><svg width="32" height="32" style="left:2438px;top:765px" viewBox="0 0 1024 1024"><path d="M880 836H144c-15.500 0-28 12.500-28 28v36c0 4.400 3.600 8 8 8h784c4.400 0 8-3.600 8-8v-36c0-15.500-12.500-28-28-28zm-622.300-84c2 0 4-.2 6-.5L431.900 722c2-.4 3.900-1.300 5.300-2.800l423.900-423.900a9.960 9.960 0 0 0 0-14.100L694.900 114.900c-1.900-1.900-4.400-2.900-7.100-2.900s-5.200 1-7.100 2.900L256.800 538.800c-1.500 1.500-2.400 3.300-2.800 5.300l-29.500 168.200a33.500 33.500 0 0 0 9.400 29.800c6.600 6.400 14.900 9.900 23.800 9.900z" fill="#f3f0ef"/></svg><svg width="32" height="32" style="left:2534px;top:765px" viewBox="0 0 1024 1024"><path d="M864 256H736v-80c0-35.300-28.700-64-64-64H352c-35.300 0-64 28.700-64 64v80H160c-17.700 0-32 14.300-32 32v32c0 4.400 3.600 8 8 8h60.400l24.700 523c1.600 34.100 29.800 61 63.900 61h454c34.200 0 62.300-26.800 63.900-61l24.700-523H888c4.400 0 8-3.600 8-8v-32c0-17.700-14.300-32-32-32zm-200 0H360v-72h304v72z" fill="#f3f0ef"/></svg><span class="t " style="left:627.02px;top:897.80px;font-size:28px;line-height:28px;color:#3572c6;letter-spacing:0.357px;-webkit-text-stroke:0.25px #3572c6;">Amanda Perk</span><span class="t " style="left:985.22px;top:897.80px;font-size:28px;line-height:28px;color:#212121;letter-spacing:0.095px;-webkit-text-stroke:0.25px #212121;">992799439-91</span><span class="t " style="left:1345.54px;top:897.80px;font-size:28px;line-height:28px;color:#212121;letter-spacing:0.390px;-webkit-text-stroke:0.25px #212121;">Severely damaged</span><span class="t " style="left:1705.48px;top:897.80px;font-size:28px;line-height:28px;color:#212121;letter-spacing:0.572px;-webkit-text-stroke:0.25px #212121;">Upgrade</span><div class="a" style="left:2410px;top:879px;width:88px;height:64px;border-radius:8px;background:#f09d42;box-shadow:0 4px 0 rgba(0,0,0,0.016)"></div><div class="a" style="left:2506px;top:879px;width:88px;height:64px;border-radius:8px;background:#cb4424;box-shadow:0 4px 0 rgba(0,0,0,0.016)"></div><svg width="32" height="32" style="left:2438px;top:895px" viewBox="0 0 1024 1024"><path d="M880 836H144c-15.500 0-28 12.500-28 28v36c0 4.400 3.600 8 8 8h784c4.400 0 8-3.600 8-8v-36c0-15.500-12.500-28-28-28zm-622.300-84c2 0 4-.2 6-.5L431.900 722c2-.4 3.900-1.300 5.300-2.800l423.900-423.900a9.960 9.960 0 0 0 0-14.100L694.900 114.900c-1.900-1.900-4.400-2.900-7.100-2.900s-5.200 1-7.100 2.900L256.800 538.800c-1.500 1.500-2.400 3.300-2.800 5.300l-29.500 168.200a33.500 33.500 0 0 0 9.400 29.800c6.600 6.400 14.900 9.900 23.800 9.900z" fill="#f3f0ef"/></svg><svg width="32" height="32" style="left:2534px;top:895px" viewBox="0 0 1024 1024"><path d="M864 256H736v-80c0-35.300-28.700-64-64-64H352c-35.300 0-64 28.700-64 64v80H160c-17.700 0-32 14.300-32 32v32c0 4.400 3.600 8 8 8h60.400l24.700 523c1.600 34.100 29.800 61 63.900 61h454c34.200 0 62.300-26.800 63.900-61l24.700-523H888c4.400 0 8-3.600 8-8v-32c0-17.700-14.300-32-32-32zm-200 0H360v-72h304v72z" fill="#f3f0ef"/></svg><span class="t " style="left:625.57px;top:1027.80px;font-size:28px;line-height:28px;color:#3572c6;letter-spacing:0.974px;-webkit-text-stroke:0.25px #3572c6;">Macbook Air 2018</span><span class="t " style="left:985.90px;top:1027.80px;font-size:28px;line-height:28px;color:#212121;letter-spacing:0.056px;-webkit-text-stroke:0.25px #212121;">117517007-01</span><span class="t " style="left:1345.54px;top:1027.80px;font-size:28px;line-height:28px;color:#212121;letter-spacing:0.390px;-webkit-text-stroke:0.25px #212121;">Severely damaged</span><span class="t " style="left:1705.48px;top:1027.80px;font-size:28px;line-height:28px;color:#212121;letter-spacing:0.572px;-webkit-text-stroke:0.25px #212121;">Upgrade</span><div class="a" style="left:2410px;top:1009px;width:88px;height:64px;border-radius:8px;background:#f09d42;box-shadow:0 4px 0 rgba(0,0,0,0.016)"></div><div class="a" style="left:2506px;top:1009px;width:88px;height:64px;border-radius:8px;background:#cb4424;box-shadow:0 4px 0 rgba(0,0,0,0.016)"></div><svg width="32" height="32" style="left:2438px;top:1025px" viewBox="0 0 1024 1024"><path d="M880 836H144c-15.500 0-28 12.500-28 28v36c0 4.400 3.600 8 8 8h784c4.400 0 8-3.600 8-8v-36c0-15.500-12.500-28-28-28zm-622.300-84c2 0 4-.2 6-.5L431.900 722c2-.4 3.900-1.300 5.300-2.800l423.900-423.900a9.960 9.960 0 0 0 0-14.100L694.900 114.900c-1.900-1.900-4.400-2.900-7.100-2.900s-5.200 1-7.100 2.900L256.800 538.800c-1.500 1.500-2.400 3.300-2.800 5.300l-29.500 168.200a33.500 33.500 0 0 0 9.400 29.800c6.600 6.400 14.900 9.900 23.800 9.900z" fill="#f3f0ef"/></svg><svg width="32" height="32" style="left:2534px;top:1025px" viewBox="0 0 1024 1024"><path d="M864 256H736v-80c0-35.300-28.700-64-64-64H352c-35.300 0-64 28.700-64 64v80H160c-17.700 0-32 14.300-32 32v32c0 4.400 3.600 8 8 8h60.400l24.700 523c1.600 34.100 29.800 61 63.900 61h454c34.200 0 62.300-26.800 63.900-61l24.700-523H888c4.400 0 8-3.600 8-8v-32c0-17.700-14.300-32-32-32zm-200 0H360v-72h304v72z" fill="#f3f0ef"/></svg><span class="t " style="left:625.57px;top:1157.80px;font-size:28px;line-height:28px;color:#3572c6;letter-spacing:0.974px;-webkit-text-stroke:0.25px #3572c6;">Macbook Air 2018</span><span class="t " style="left:985.90px;top:1157.80px;font-size:28px;line-height:28px;color:#212121;letter-spacing:0.056px;-webkit-text-stroke:0.25px #212121;">117517007-01</span><span class="t " style="left:1345.79px;top:1157.80px;font-size:28px;line-height:28px;color:#212121;letter-spacing:0.362px;-webkit-text-stroke:0.25px #212121;">Outdated</span><span class="t " style="left:1705.48px;top:1157.80px;font-size:28px;line-height:28px;color:#212121;letter-spacing:0.572px;-webkit-text-stroke:0.25px #212121;">Upgrade</span><div class="a" style="left:2410px;top:1139px;width:88px;height:64px;border-radius:8px;background:#f09d42;box-shadow:0 4px 0 rgba(0,0,0,0.016)"></div><div class="a" style="left:2506px;top:1139px;width:88px;height:64px;border-radius:8px;background:#cb4424;box-shadow:0 4px 0 rgba(0,0,0,0.016)"></div><svg width="32" height="32" style="left:2438px;top:1155px" viewBox="0 0 1024 1024"><path d="M880 836H144c-15.500 0-28 12.500-28 28v36c0 4.400 3.600 8 8 8h784c4.400 0 8-3.600 8-8v-36c0-15.500-12.500-28-28-28zm-622.300-84c2 0 4-.2 6-.5L431.900 722c2-.4 3.900-1.300 5.300-2.800l423.900-423.900a9.960 9.960 0 0 0 0-14.100L694.900 114.900c-1.900-1.900-4.400-2.900-7.100-2.900s-5.200 1-7.100 2.900L256.800 538.800c-1.500 1.500-2.400 3.300-2.800 5.300l-29.500 168.200a33.500 33.500 0 0 0 9.400 29.800c6.600 6.400 14.900 9.900 23.800 9.900z" fill="#f3f0ef"/></svg><svg width="32" height="32" style="left:2534px;top:1155px" viewBox="0 0 1024 1024"><path d="M864 256H736v-80c0-35.300-28.700-64-64-64H352c-35.300 0-64 28.700-64 64v80H160c-17.700 0-32 14.300-32 32v32c0 4.400 3.600 8 8 8h60.400l24.700 523c1.600 34.100 29.800 61 63.900 61h454c34.200 0 62.300-26.800 63.900-61l24.700-523H888c4.400 0 8-3.600 8-8v-32c0-17.700-14.300-32-32-32zm-200 0H360v-72h304v72z" fill="#f3f0ef"/></svg><div class="a" style="left:594px;top:1237px;width:2204px;height:26px;background:#fafafa;border-top:2px solid #e8e8e8;border-bottom:2px solid #e8e8e8;box-sizing:content-box"></div><div class="a" style="left:600px;top:1244.5px;width:1013px;height:16.500px;border-radius:8.25px;background:#c1c1c1"></div></div></div>
</div>
</body></html>
